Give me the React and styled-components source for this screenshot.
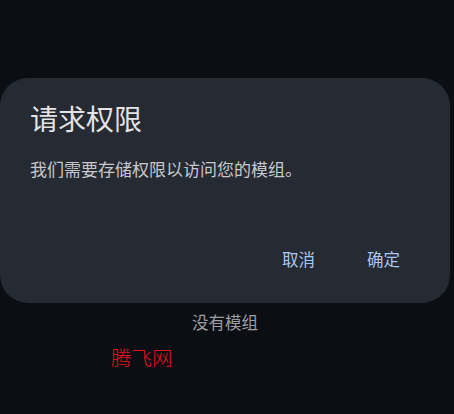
import { createGlobalStyle, styled } from 'styled-components';

const GlobalStyle = createGlobalStyle`
  html, body {
    margin: 0;
    padding: 0;
    background: #0b0e12;
    height: 100%;
  }
  body {
    font-family: "Noto Sans CJK SC", "Noto Sans", sans-serif;
  }
`;

const Screen = styled.div`
  width: 454px;
  height: 414px;
  background: #0b0e12;
  overflow: hidden;
`;

const Dialog = styled.div`
  margin-top: 78px;
  width: 450px;
  height: 225px;
  box-sizing: border-box;
  background: #262a32;
  border-radius: 28px;
  padding: 22px 24px 24px 30px;
  display: flex;
  flex-direction: column;
`;

const Title = styled.h2`
  margin: 0;
  font-size: 28px;
  line-height: 36px;
  font-weight: 400;
  color: #e3e3e6;
`;

const Message = styled.p`
  margin: 21px 0 0;
  font-size: 17px;
  line-height: 24px;
  color: #c6c8cd;
`;

const Actions = styled.div`
  margin-top: auto;
  display: flex;
  justify-content: flex-end;
  height: 40px;
`;

const TextButton = styled.button`
  background: none;
  border: none;
  padding: 0 26px;
  font-family: inherit;
  font-size: 16.5px;
  color: #a9c7f5;
  cursor: pointer;
`;

const Empty = styled.div`
  width: 450px;
  margin-top: 8px;
  text-align: center;
  font-size: 16.5px;
  line-height: 22px;
  color: #9c9ea3;
`;

const Watermark = styled.div`
  margin-top: 11px;
  padding-left: 111px;
  font-size: 20.5px;
  line-height: 26px;
  font-weight: 300;
  color: #e0121c;
`;

export default function App() {
  return (
    <Screen>
      <GlobalStyle />
      <Dialog>
        <Title>请求权限</Title>
        <Message>我们需要存储权限以访问您的模组。</Message>
        <Actions>
          <TextButton type="button">取消</TextButton>
          <TextButton type="button">确定</TextButton>
        </Actions>
      </Dialog>
      <Empty>没有模组</Empty>
      <Watermark>腾飞网</Watermark>
    </Screen>
  );
}
